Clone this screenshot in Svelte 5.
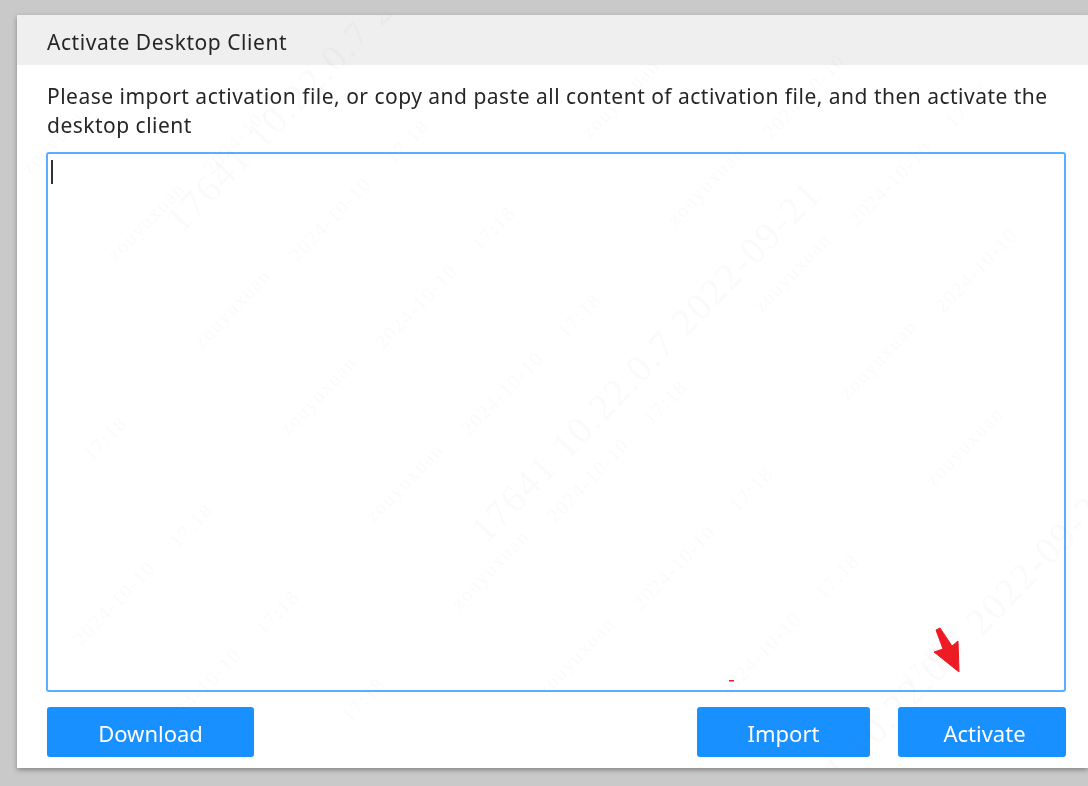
<script lang="ts">
  // faint tiled watermark, in page coordinates
  const marks: { text: string; x: number; y: number; big: boolean }[] = [];
  const stepA = [86, 87];
  const stepB = [388, -210];
  const seeds = [
    { text: 'zouyuxuan', x: 323, y: 400 },
    { text: '2024-10-10', x: 507, y: 398 },
    { text: '17:18', x: 670, y: 407 },
  ];
  for (const s of seeds) {
    for (let i = -8; i <= 8; i++) {
      for (let j = -3; j <= 3; j++) {
        const x = s.x + i * stepA[0] + j * stepB[0];
        const y = s.y + i * stepA[1] + j * stepB[1];
        if (x > 60 && x < 1040 && y > 60 && y < 730) marks.push({ text: s.text, x, y, big: false });
      }
    }
  }
  const bigCentres = [[350, 60], [655, 370], [950, 670]];
  for (const [x, y] of bigCentres) {
    marks.push({ text: '17641 10.22.0.7 2022-09-21', x, y, big: true });
  }
</script>

<div class="page">
  <div class="dialog">
    <div class="dialog-title">Activate Desktop Client</div>
    <div class="dialog-body">
      <p class="hint">Please import activation file, or copy and paste all content of activation file, and then activate the desktop client</p>
      <div class="input-wrap">
        <textarea class="activation-input" aria-label="Activation file content"></textarea>
        <span class="caret"></span>
      </div>
      <div class="actions">
        <button type="button" class="btn btn-download">Download</button>
        <div class="actions-right">
          <button type="button" class="btn btn-import">Import</button>
          <button type="button" class="btn btn-activate">Activate</button>
        </div>
      </div>
    </div>

    <svg class="watermark" viewBox="17 15 1071 753" aria-hidden="true">
      {#each marks as m}
        <text
          x={m.x}
          y={m.y}
          class={m.big ? 'mark-big' : 'mark-small'}
          text-anchor="middle"
          transform="rotate(-46 {m.x} {m.y})">{m.text}</text>
      {/each}
    </svg>

    <!-- red annotation arrow pasted on the screenshot -->
    <svg class="annotation" viewBox="17 15 1071 753" aria-hidden="true">
      <polygon
        points="936,630 940,628 952,646 958,641 959,672 934,652 943,649"
        fill="#ed1c24"
        stroke="#ed1c24"
        stroke-width="1"
        stroke-linejoin="round"
      />
      <rect x="729" y="680" width="5" height="1.5" fill="#ed1c24" />
    </svg>
  </div>
</div>

<style>
  :global(body) {
    margin: 0;
    background: #c9c9c9;
    overflow: hidden;
  }

  .page {
    height: 786px;
    padding: 15px 0 0 17px;
    box-sizing: border-box;
    font-family: "Noto Sans", "Liberation Sans", sans-serif;
    filter: blur(0.45px);
  }

  .dialog {
    position: relative;
    width: 1071px;
    height: 753px;
    background: #fff;
    box-shadow: 0 2px 5px rgba(0, 0, 0, 0.35);
    overflow: hidden;
  }

  .dialog-title {
    height: 50px;
    line-height: 54px;
    padding-left: 30px;
    background: #efefef;
    font-size: 21px;
    letter-spacing: 0.55px;
    color: #262626;
  }

  .dialog-body {
    padding: 17px 22px 0 29px;
  }

  .hint {
    margin: 0;
    font-size: 21px;
    letter-spacing: 0.49px;
    line-height: 29px;
    padding-left: 1px;
    color: #262626;
  }

  .input-wrap {
    position: relative;
    margin-top: 12px;
    height: 540px;
  }

  .activation-input {
    display: block;
    width: 100%;
    height: 100%;
    box-sizing: border-box;
    border: 2px solid #5aaeff;
    border-radius: 3px;
    background: transparent;
    outline: none;
    resize: none;
  }

  .caret {
    position: absolute;
    left: 5px;
    top: 8px;
    width: 2px;
    height: 24px;
    background: #333;
  }

  .actions {
    display: flex;
    justify-content: space-between;
    margin-top: 15px;
    padding-left: 1px;
  }

  .actions-right {
    display: flex;
    gap: 28px;
  }

  .btn {
    height: 50px;
    border: none;
    border-radius: 3px;
    background: #1890ff;
    color: #fff;
    font-family: inherit;
    font-size: 22px;
    padding: 2px 0 0;
    cursor: pointer;
  }

  .btn-download {
    width: 207px;
  }

  .btn-import {
    width: 173px;
  }

  .btn-activate {
    width: 168px;
    padding-left: 5px;
  }

  .watermark,
  .annotation {
    position: absolute;
    inset: 0;
    width: 100%;
    height: 100%;
    pointer-events: none;
  }

  .mark-small,
  .mark-big {
    font-family: "Liberation Serif", serif;
    fill: rgba(120, 120, 120, 0.035);
  }

  .mark-small {
    font-size: 20px;
    letter-spacing: 1.5px;
  }

  .mark-big {
    font-size: 38px;
    letter-spacing: 2px;
  }
</style>
